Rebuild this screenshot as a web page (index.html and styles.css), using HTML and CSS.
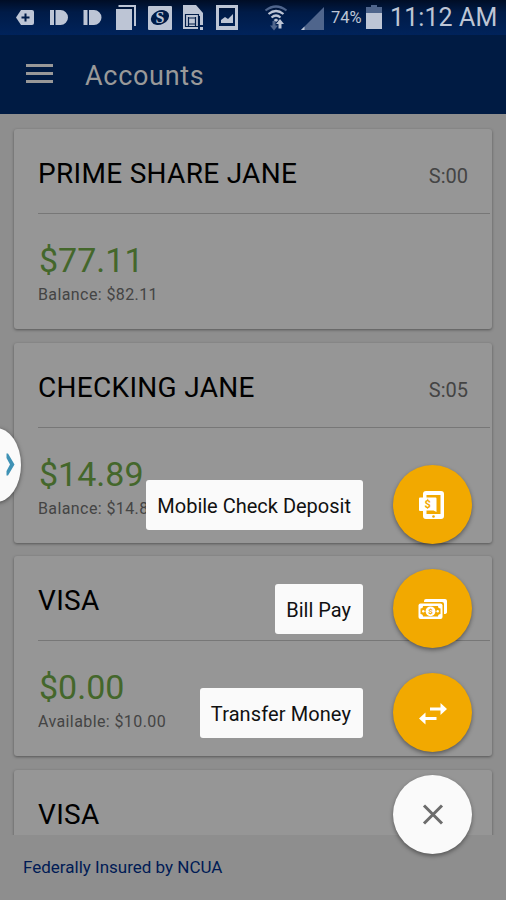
FILE: index.html
```html
<!DOCTYPE html>
<html lang="en">
<head>
    <meta charset="UTF-8">
    <meta name="viewport" content="width=device-width, initial-scale=1.0">
    <title>Accounts</title>
    <link rel="stylesheet" href="styles.css">
</head>
<body>
    <div class="statusbar">
        <svg class="status-icons" width="300" height="35" viewBox="0 0 300 35">
            <g class="light">
                <path d="M21 10h11q2 0 2 2v11q0 2-2 2H21l-5-7.500z"/>
                <path d="M50 10h4v15h-4zM55.500 10h5a7.500 7.500 0 0 1 0 15h-5z"/>
                <path d="M83.500 10h4v15h-4zM89 10h5a7.500 7.500 0 0 1 0 15h-5z"/>
                <path d="M116 9h16v21h-16z"/>
                <path d="M118.500 5H136v21h-2V7h-15.500z"/>
                <rect x="148" y="6" width="24" height="24" rx="1"/>
                <path d="M183 5h13l7 8v3h-5v13h-15z"/>
                <path d="M200 16h3v9h-3zM200 27h3v3h-3z"/>
                <path fill-rule="evenodd" d="M216 5h22v25h-22zM219 8v18h16V8z"/>
                <path d="M221 23v-3l4-3 3 2 5-5v9z"/>
            </g>
            <path class="cut" d="M25.500 13.500v8M21.500 17.500h8"/>
            <ellipse class="hole" cx="160" cy="17.500" rx="9.500" ry="7" transform="rotate(-25 160 17.500)"/>
            <text class="logo-s" x="160" y="23" text-anchor="middle">S</text>
            <path class="cut thin" d="M185.500 14.500h13v12h-13zM188.500 17v9.500M195.500 17v9.500M188.500 18h7M188.500 24h7"/>
            <g class="wifi">
                <path class="faint" d="M265.500 10.500q10.500-8 21 0"/>
                <path d="M268.500 14q7.500-6 15 0M271.500 17.500q4.500-4 9 0"/>
            </g>
            <path class="light" d="M273.500 20l2.500-1.500 2.500 1.500-2.500 2zM278.500 28.500v-4.500h-2.500l4-5 4 5h-2.500v4.500z"/>
            <path class="muted" d="M272.500 21h3v4.500h2.500l-4 5-4-5h2.500z"/>
        </svg>
        <svg class="status-signal" width="26" height="35" viewBox="0 0 26 35">
            <path class="muted" d="M24 7v23H1z"/>
            <path class="light" d="M4.500 26.500v3.500H1z"/>
        </svg>
        <span class="percent">74%</span>
        <svg class="battery" width="16" height="35" viewBox="0 0 16 35">
            <path class="muted" d="M0 7h5V5h6v2h5v6H0z"/>
            <path class="light" d="M0 13h16v16H0z"/>
        </svg>
        <span class="clock">11:12 AM</span>
    </div>

    <header class="toolbar">
        <div class="menu">
            <span></span>
            <span></span>
            <span></span>
        </div>
        <h1>Accounts</h1>
    </header>

    <main class="accounts">
        <section class="card">
            <div class="card-head">
                <h2>PRIME SHARE JANE</h2>
                <span class="suffix">S:00</span>
            </div>
            <div class="amount">$77.11</div>
            <div class="detail">Balance: $82.11</div>
        </section>
        <section class="card">
            <div class="card-head">
                <h2>CHECKING JANE</h2>
                <span class="suffix">S:05</span>
            </div>
            <div class="amount">$14.89</div>
            <div class="detail">Balance: $14.89</div>
        </section>
        <section class="card">
            <div class="card-head">
                <h2>VISA</h2>
            </div>
            <div class="amount">$0.00</div>
            <div class="detail">Available: $10.00</div>
        </section>
        <section class="card">
            <div class="card-head">
                <h2>VISA</h2>
            </div>
        </section>
    </main>

    <footer class="footer">Federally Insured by NCUA</footer>

    <div class="drawer-handle">
        <svg width="21" height="74" viewBox="0 0 21 74">
            <path d="M6.500 25.500h1.500l6.500 11-6.500 11H6.500v-4.500l3.500-6.500-3.500-6.500z"/>
        </svg>
    </div>

    <div class="actions">
        <div class="action">
            <span class="label">Mobile Check Deposit</span>
            <button class="fab">
                <svg width="30" height="30" viewBox="0 0 30 30">
                    <path class="fill" fill-rule="evenodd" d="M8 1h15q3 0 3 3v22q0 3-3 3H8q-3 0-3-3v-5H2q-1 0-1-1V8.500q0-1 1-1h3V4q0-3 3-3zM8.500 5v2.500h9q1 0 1 1V22l-3-1.500H8.500v3.500h14V5z"/>
                    <circle class="orange" cx="15.500" cy="26.500" r="1.300"/>
                    <text class="dollar" x="9.700" y="17.500" text-anchor="middle">$</text>
                </svg>
            </button>
        </div>
        <div class="action">
            <span class="label">Bill Pay</span>
            <button class="fab">
                <svg width="30" height="30" viewBox="0 0 30 30">
                    <path class="fill" d="M6 8V7q0-2 2-2h19q2 0 2 2v11q0 2-3 2V10q0-2-2-2z"/>
                    <rect class="fill" x="0.500" y="9.500" width="24" height="15.500" rx="2"/>
                    <path class="orange" d="M5 12h15q0 2.500 2.500 2.500v5.500q-2.500 0-2.500 2.500H5q0-2.500-2.500-2.500v-5.500Q5 14.500 5 12z"/>
                    <circle class="fill" cx="12.500" cy="17.300" r="4.900"/>
                    <circle class="fill" cx="5.300" cy="17.300" r="1.200"/>
                    <circle class="fill" cx="19.700" cy="17.300" r="1.200"/>
                    <text class="dollar small" x="12.500" y="20.300" text-anchor="middle">$</text>
                </svg>
            </button>
        </div>
        <div class="action">
            <span class="label wide">Transfer Money</span>
            <button class="fab">
                <svg width="30" height="30" viewBox="0 0 30 30">
                    <path class="fill" d="M12 9.500h10.500V5l6.500 6-6.500 6v-4.500H12zM18.500 22H7.500v4.500L1 20.500l6.500-6v4.500h11z"/>
                </svg>
            </button>
        </div>
        <div class="action">
            <button class="fab close">
                <svg width="30" height="30" viewBox="0 0 30 30">
                    <path d="M6 5.500l18 18M24 5.500L6 23.500"/>
                </svg>
            </button>
        </div>
    </div>
</body>
</html>
```
FILE: styles.css
```css
*{
    box-sizing: border-box;
}
body{
    margin: 0;
    height: 900px;
    display: flex;
    flex-direction: column;
    position: relative;
    overflow: hidden;
    background-color: #8e8e8e;
    font-family: Roboto, sans-serif;
}
h1, h2{
    margin: 0;
    font-weight: 400;
}
svg{
    display: block;
}

/* status bar */
.statusbar{
    height: 35px;
    flex-shrink: 0;
    display: flex;
    align-items: center;
    background: linear-gradient(#000d25, #001b47 35%, #00235b);
    color: #bdc5d5;
}
.status-icons, .status-signal{
    flex-shrink: 0;
}
.light{
    fill: #bdc5d5;
}
.muted{
    fill: #4f658c;
}
.hole{
    fill: #001c49;
}
.cut{
    stroke: #001c49;
    stroke-width: 2;
    fill: none;
}
.cut.thin{
    stroke-width: 1.2;
}
.logo-s{
    fill: #bdc5d5;
    font: bold 16px "Liberation Serif", serif;
}
.wifi{
    fill: none;
    stroke: #bdc5d5;
    stroke-width: 2.2;
}
.wifi .faint{
    stroke: #4f658c;
}
.percent{
    width: 40px;
    padding-left: 5px;
    font-size: 16.5px;
}
.battery{
    flex-shrink: 0;
}
.clock{
    margin-left: 8px;
    font-size: 25px;
    letter-spacing: .1px;
    white-space: nowrap;
}

/* toolbar */
.toolbar{
    height: 79px;
    flex-shrink: 0;
    display: flex;
    align-items: center;
    padding-left: 26px;
    background-color: #001b43;
}
.menu{
    width: 27px;
    margin-top: -2px;
    display: grid;
    gap: 5px;
}
.menu span{
    height: 3px;
    background-color: #989898;
}
.toolbar h1{
    margin: 2px 0 0 32px;
    color: #999;
    font-size: 27px;
    letter-spacing: .7px;
}

/* account cards */
.accounts{
    height: 721px;
    flex-shrink: 0;
    display: flex;
    flex-direction: column;
    gap: 13.7px;
    padding: 15px 14px 0;
    overflow: hidden;
}
.card{
    height: 200px;
    flex-shrink: 0;
    padding-left: 24px;
    background-color: #969696;
    border-radius: 3px;
    box-shadow: 0 1px 3px rgba(0,0,0,.4);
}
.card-head{
    height: 85px;
    display: flex;
    justify-content: space-between;
    align-items: baseline;
    padding: 28px 22px 0 0;
    margin-right: 2px;
    border-bottom: 1px solid #777;
}
.card h2{
    font-size: 28px;
    line-height: 33px;
    letter-spacing: .3px;
    color: #000;
}
.suffix{
    font-size: 20px;
    color: #444;
}
.amount{
    margin-top: 26px;
    padding-left: 1px;
    font-size: 34px;
    line-height: 41px;
    color: #44672b;
}
.detail{
    margin-top: 4px;
    font-size: 16px;
    line-height: 19px;
    letter-spacing: .4px;
    color: #444;
}
.footer{
    flex: 1;
    padding: 22px 23px 0;
    font-size: 17px;
    line-height: 20px;
    color: #001b55;
}

/* edge handle */
.drawer-handle{
    position: absolute;
    left: -29px;
    top: 428px;
    width: 50px;
    height: 74px;
    padding-left: 29px;
    background-color: #fafafa;
    border-radius: 50%;
    box-shadow: 0 1px 4px rgba(0,0,0,.5);
}
.drawer-handle path{
    fill: #3f92b5;
}

/* floating menu */
.actions{
    position: absolute;
    right: 34px;
    top: 465px;
    display: grid;
    gap: 25px;
}
.action{
    display: flex;
    justify-content: flex-end;
    align-items: center;
}
.label{
    height: 50px;
    margin-right: 30px;
    padding: 0 12px 0 11px;
    border-radius: 3px;
    background-color: #fafafa;
    font-size: 20px;
    line-height: 52px;
    color: #111;
}
.label.wide{
    letter-spacing: .1px;
}
.fab{
    width: 79px;
    height: 79px;
    padding: 0;
    display: flex;
    justify-content: center;
    align-items: center;
    border: none;
    border-radius: 50%;
    background-color: #f2a900;
    box-shadow: 0 2px 4px rgba(0,0,0,.4);
}
.fab.close{
    margin-top: -2px;
    background-color: #fafafa;
}
.close path{
    stroke: #6c6c6c;
    stroke-width: 3;
}
.fill{
    fill: #fff;
}
.orange{
    fill: #f2a900;
}
.dollar{
    fill: #f2a900;
    font: bold 11px Roboto, sans-serif;
}
.dollar.small{
    font-size: 8px;
}
```
